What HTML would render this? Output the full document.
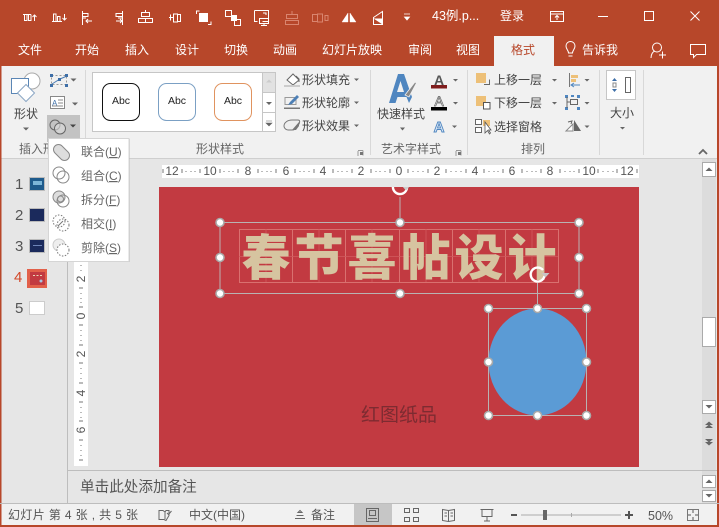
<!DOCTYPE html>
<html><head><meta charset="utf-8"><style>
html,body{margin:0;padding:0;background:#e6e6e6;overflow:hidden}
svg{display:block}
text{font-family:"Liberation Sans","Noto Sans CJK SC",sans-serif;font-size:12px}
.w{fill:#fff}.d{fill:#555}.m{text-anchor:middle}
.ws{fill:none;stroke:#fff;stroke-width:1}
.g{fill:none;stroke:#777;stroke-width:1}
.h{fill:#fff;stroke:#a9a9a9;stroke-width:1.6}
.tri{fill:#666}
.art{font-family:"Noto Sans CJK SC",sans-serif;font-weight:900;font-size:49px;fill:#D6C4A0;text-anchor:middle}
</style></head><body>
<svg width="719" height="527" viewBox="0 0 719 527" xmlns="http://www.w3.org/2000/svg">
<rect width="719" height="527" fill="#e6e6e6"/>
<rect width="719" height="66" fill="#B7472A"/>
<rect x="0" y="66" width="719" height="92" fill="#f1f1f1"/>
<rect x="0" y="158" width="719" height="1" fill="#cfcfcf"/>
<rect x="0" y="0" width="1.5" height="527" fill="#B7472A"/>
<rect x="717" y="0" width="2" height="527" fill="#B7472A"/>

<!-- QAT icons -->
<g class="ws">
<path d="M23 14.500h8M24.500 14.500v6h2.500v-6M28.500 14.500v6h2.500v-6"/><path d="M34.500 21v-6M32.500 17l2-2 2 2"/>
<path d="M52 21.500h10M53.500 21v-7h2.500v7M57.500 21v-4.500h2.500v4.500M64.500 14v6M62.500 18l2 2 2-2"/>
<path d="M82.500 11v14M83 13.500h5v3h-5M83 18h3M92 21h-6M88 19l-2 2 2 2" />
<path d="M122.500 11v14M122 13.500h-6v3h6M116 21h6M120 19l2 2-2 2M122 18h-4"/>
<path d="M145.500 10v3M145.500 19v4M141.500 12.500h8v4h-8zM138.500 18.500h14v4h-14z"/>
<path d="M169 17.500h4M173.500 14h4v8h-4zM177.500 14.500h3v7h-3zM170.500 14.500v6"/>
<path d="M196.500 14v-3h3M208 24.500h3v-3"/>
<rect x="199" y="13" width="9" height="9" fill="#fff" stroke="none"/>
<rect x="225.500" y="10.500" width="6" height="6"/><rect x="234.500" y="19.500" width="6" height="6"/><rect x="231" y="15" width="6" height="6" fill="#fff" stroke="none"/>
<path d="M254.500 10.500h14v11h-6M254.500 10.500v11h3"/><path d="M259.500 18.500h9v5h-9zM264 23.500v2M261 25.500h6"/><path d="M263 13h3v2"/>
</g>
<g fill="none" stroke="#d9856f">
<path d="M292 11v4M286.500 14.500h11v4h-11zM285.500 20.500h13v4h-13z"/>
<path d="M312.500 14.500h5v7h-5zM317.500 14h5v8h-5zM325 15.500h3v5h-3z"/>
</g>
<path d="M342 22l6-9v9zM350 13l6 9h-6z" fill="#fff" stroke="#fff" stroke-width=".4"/>
<path d="M373.500 17.500l9-6v13h-9z" fill="none" stroke="#fff"/><path d="M373.500 18.500h9v6z" fill="#fff"/>
<path d="M404 14h6M404.500 17h5l-2.500 3z" fill="#fff" stroke="#fff" stroke-width=".8"/>
<text x="432" y="20" class="w" style="font-size:12.500px">43例.p...</text>
<text x="500" y="20" class="w">登录</text>
<g class="ws"><rect x="550.500" y="11.500" width="13" height="10"/><path d="M550.500 14h13M557 20v-4M555 17.500l2-2 2 2"/>
<path d="M598 16.500h10"/><rect x="644.500" y="11.500" width="9" height="9"/><path d="M690.500 11.500l9 9M699.500 11.500l-9 9"/></g>

<!-- Tabs -->
<rect x="494" y="36" width="60" height="30" fill="#f1f1f1"/>
<text x="18" y="54" class="w">文件</text><text x="75" y="54" class="w">开始</text><text x="125" y="54" class="w">插入</text><text x="175" y="54" class="w">设计</text><text x="224" y="54" class="w">切换</text><text x="273" y="54" class="w">动画</text><text x="322" y="54" class="w">幻灯片放映</text><text x="408" y="54" class="w">审阅</text><text x="456" y="54" class="w">视图</text>
<text x="511" y="54" fill="#B7472A">格式</text>
<g class="ws"><path d="M568.500 53c0-3-2.500-3.500-2.500-7a4.500 4.500 0 0 1 9 0c0 3.500-2.500 4-2.500 7zM568.500 56h4"/></g>
<text x="582" y="54" class="w">告诉我</text>
<g class="ws"><circle cx="657" cy="47.500" r="4.500"/><path d="M651 58c0-4 2-6.500 4-7"/><path d="M659 55h7M662.500 51.500v7"/>
<path d="M690.500 44.500h15v10h-9l-3 3v-3h-3z"/></g>

<!-- Insert group -->
<circle cx="32" cy="81" r="8" fill="#fff" stroke="#a9a9a9"/>
<rect x="11.500" y="78.500" width="17" height="15" fill="#fff" stroke="#5b86b5"/>
<path d="M17.500 93l8.500-8.500 8.500 8.500-8.500 8.500z" fill="#fff" stroke="#8aa6c4"/>
<text x="26" y="118" class="m" fill="#444">形状</text>
<path d="M23 127.500h6l-3 3z" class="tri"/>
<g>
<rect x="51.500" y="75.500" width="15" height="9" fill="none" stroke="#999" stroke-dasharray="2 2"/>
<path d="M52 84l8-5 7-3" fill="none" stroke="#4d7fb5"/>
<rect x="50" y="74" width="3" height="3" fill="#3e6fa8"/><rect x="65" y="74" width="3" height="3" fill="#3e6fa8"/><rect x="50" y="84" width="3" height="3" fill="#3e6fa8"/><rect x="65" y="84" width="3" height="3" fill="#3e6fa8"/><rect x="58" y="78" width="3" height="3" fill="#3e6fa8"/>
<rect x="50.500" y="96.500" width="14" height="12" fill="#fff" stroke="#888"/>
<text x="52" y="106" style="font-size:8px" fill="#3e6fa8">A</text><path d="M58 100h5M58 103h5M52 106h11" stroke="#888"/>
<path d="M70.500 78.500h6l-3 3zM72 102.500h6l-3 3z" class="tri"/>
</g>
<rect x="47" y="115" width="33" height="27" fill="#c3c3c3"/>
<circle cx="55" cy="125" r="5" fill="none" stroke="#666"/><circle cx="60" cy="128.500" r="5.500" fill="#ddd" fill-opacity=".6" stroke="#666"/>
<path d="M70 124.500h6l-3 3z" fill="#444"/>
<rect x="85" y="70" width="1" height="85" fill="#d8d8d8"/>
<text x="19" y="153" fill="#666">插入形</text>

<!-- Shape styles -->
<rect x="92.500" y="72.500" width="170" height="59" fill="#fff" stroke="#c6c6c6"/>
<rect x="102.500" y="83.500" width="37" height="37" rx="8" fill="#fff" stroke="#111"/>
<rect x="158.500" y="83.500" width="37" height="37" rx="8" fill="#fff" stroke="#7ba0c4"/>
<rect x="214.500" y="83.500" width="37" height="37" rx="8" fill="#fff" stroke="#e0935f"/>
<text x="121" y="104" class="m" style="font-size:10.500px" fill="#222">Abc</text><text x="177" y="104" class="m" style="font-size:10.500px" fill="#222">Abc</text><text x="233" y="104" class="m" style="font-size:10.500px" fill="#222">Abc</text>
<rect x="262.500" y="72.500" width="13" height="20" fill="#e2e2e2" stroke="#c6c6c6"/><rect x="262.500" y="92.500" width="13" height="20" fill="#fff" stroke="#c6c6c6"/><rect x="262.500" y="112.500" width="13" height="19" fill="#fff" stroke="#c6c6c6"/>
<path d="M266 82.500h6l-3-3z" fill="#ccc"/><path d="M266 102h6l-3 3z" class="tri"/><path d="M266 121h6M266 123h6l-3 3z" stroke="#666" stroke-width=".6" fill="#666"/>
<text x="196" y="153" fill="#666">形状样式</text>
<path d="M358 150.500h5M363 150.500v5M358 151v5" stroke="#999" fill="none"/><rect x="360" y="152" width="3" height="3" fill="#777"/>

<!-- Shape fill/outline/effect -->
<path d="M287 80l6-6 6 6-6 5z" fill="#fff" stroke="#666"/><path d="M296 76l3 3v3" fill="none" stroke="#666"/><rect x="284" y="85" width="16" height="2" fill="#ccc"/>
<text x="302" y="84" fill="#444">形状填充</text><path d="M354 78.500h5l-2.500 2.500z" class="tri"/>
<path d="M285 97.500h11v7h-11z" fill="none" stroke="#999"/><path d="M288 105l2-3 7-7 2 2-7 7z" fill="#4d7fb5"/><rect x="284" y="107.500" width="16" height="1.500" fill="#777"/>
<text x="302" y="107" fill="#444">形状轮廓</text><path d="M354 101.500h5l-2.500 2.500z" class="tri"/>
<path d="M284 126a8 6 0 0 1 8-6h6c2 0 2 2 1 4l-2 3c-1 2-3 3-5 3h-4c-2 0-4-2-4-4z" fill="#eee" stroke="#777"/><path d="M292 130l7-8v4l-3 4z" fill="#777"/>
<text x="302" y="130" fill="#444">形状效果</text><path d="M354 124.500h5l-2.500 2.500z" class="tri"/>
<rect x="370" y="70" width="1" height="85" fill="#d8d8d8"/>

<!-- WordArt -->
<path d="M389 103l9-29h6l8 23-3 6-2.500-6h-9l-2 6zM397 92h7l-3.500-11z" fill="#4f86c0" fill-rule="evenodd"/>
<path d="M405 95l10-13 1.500 1-7.500 14z" fill="#888" stroke="#f1f1f1" stroke-width=".8"/>
<text x="401" y="118" class="m" fill="#444">快速样式</text>
<path d="M400 127.500h5l-2.500 3z" class="tri"/>
<text x="439" y="85" class="m" style="font-size:14px;font-weight:bold" fill="#555">A</text><rect x="431" y="85" width="16" height="3.500" fill="#7f1d1d"/>
<text x="439" y="106" class="m" style="font-size:14px" fill="#fff" stroke="#666" stroke-width=".7">A</text><rect x="431" y="107" width="16" height="3.500" fill="#000"/>
<text x="439" y="132" class="m" style="font-size:15px;font-weight:bold" fill="#dbe7f5" stroke="#4f86c0" stroke-width=".9">A</text>
<path d="M453 79h5l-2.500 2.500zM453 102h5l-2.500 2.500zM452 125.500h5l-2.500 2.500z" class="tri"/>
<text x="381" y="153" fill="#666">艺术字样式</text>
<path d="M456 150.500h5M461 150.500v5M456 151v5" stroke="#999" fill="none"/><rect x="458" y="152" width="3" height="3" fill="#777"/>
<rect x="467" y="70" width="1" height="85" fill="#d8d8d8"/>

<!-- Arrange -->
<rect x="476" y="73" width="10" height="10" fill="#edc078"/><path d="M484 84.500h5.500v-5" fill="none" stroke="#666"/>
<text x="494" y="84" fill="#444">上移一层</text>
<rect x="476" y="96" width="10" height="10" fill="#edc078"/><rect x="483.500" y="102.500" width="6.500" height="6.500" fill="#fff" stroke="#555"/>
<text x="494" y="107" fill="#444">下移一层</text>
<path d="M475.500 119.500h6v5h-6zM475.500 127.500h6v5h-6z" fill="#fff" stroke="#666"/><rect x="483" y="120" width="7" height="6" fill="#edc078"/><path d="M485 122v11l2.500-2.500 2 3.500 1-1-2-3h2.500z" fill="#fff" stroke="#555" stroke-width=".8"/>
<text x="494" y="131" fill="#444">选择窗格</text>
<path d="M552 79h5l-2.500 2.500zM552 102h5l-2.500 2.500zM584.500 79h5l-2.500 2.500zM584.500 102h5l-2.500 2.500zM584.500 125.500h5l-2.500 2.500z" class="tri"/>
<path d="M569.500 73v14" stroke="#777"/><rect x="571" y="75" width="7" height="3" fill="#edc078"/><rect x="571" y="79" width="5" height="3" fill="#edc078"/><path d="M580 85h-9M574 83l-3 2 3 2" stroke="#4f86c0" fill="none"/>
<g fill="#4f86c0"><rect x="565" y="95" width="3" height="3"/><rect x="577" y="95" width="3" height="3"/><rect x="565" y="107" width="3" height="3"/><rect x="577" y="107" width="3" height="3"/><rect x="571" y="95" width="3" height="2"/></g>
<path d="M570.500 99.500h7v5h-7zM567.500 102h3M567 97v11" fill="none" stroke="#666"/>
<path d="M566 131l7-7v7z" fill="#fff" stroke="#888"/><path d="M574 120l7 11h-7z" fill="#666"/><path d="M568 122l4-1-1 3" fill="none" stroke="#666"/>
<rect x="599" y="70" width="1" height="85" fill="#d8d8d8"/>
<rect x="606.500" y="70.500" width="29" height="29" fill="#fff" stroke="#c6c6c6"/>
<rect x="625.500" y="77.500" width="5" height="15" fill="#fff" stroke="#666"/>
<path d="M617 81l-2.500-3-2.500 3zM617 89l-2.500 3-2.500-3z" fill="#3e6fa8"/><rect x="613" y="83" width="3" height="4" fill="none" stroke="#888"/>
<text x="622" y="117" class="m" fill="#444">大小</text>
<path d="M620 127h5l-2.500 2.500z" class="tri"/>
<text x="521" y="153" fill="#666">排列</text>
<rect x="643" y="70" width="1" height="85" fill="#d8d8d8"/>
<path d="M699 154l4-4 4 4" fill="none" stroke="#666" stroke-width="1.800"/>

<!-- Ruler horizontal -->
<rect x="162" y="165" width="477" height="13" fill="#fff"/>
<g fill="#555">
<text x="172" y="175" class="m">12</text><text x="210" y="175" class="m">10</text><text x="248" y="175" class="m">8</text><text x="286" y="175" class="m">6</text><text x="323" y="175" class="m">4</text><text x="361" y="175" class="m">2</text><text x="399" y="175" class="m">0</text><text x="437" y="175" class="m">2</text><text x="475" y="175" class="m">4</text><text x="512" y="175" class="m">6</text><text x="550" y="175" class="m">8</text><text x="589" y="175" class="m">10</text><text x="627" y="175" class="m">12</text>
</g>
<path d="M163 169v4M182 169v4M186 171v1M191 171v1M195 171v1M200 169v4M220 169v4M224 171v1M229 171v1M233 171v1M238 169v4M258 169v4M262 171v1M267 171v1M271 171v1M276 169v4M295 169v4M300 171v1M304 171v1M309 171v1M314 169v4M333 169v4M338 171v1M342 171v1M347 171v1M352 169v4M371 169v4M376 171v1M380 171v1M385 171v1M390 169v4M408 169v4M413 171v1M418 171v1M423 171v1M428 169v4M446 169v4M451 171v1M456 171v1M461 171v1M466 169v4M484 169v4M489 171v1M494 171v1M498 171v1M503 169v4M522 169v4M527 171v1M532 171v1M536 171v1M541 169v4M560 169v4M565 171v1M570 171v1M574 171v1M579 169v4M598 169v4M603 171v1M608 171v1M613 171v1M617 169v4M637 169v4" stroke="#777" fill="none"/>

<!-- Left panel -->
<rect x="67" y="159" width="1" height="344" fill="#bdbdbd"/>
<text x="15" y="189" style="font-size:15px" fill="#555">1</text><text x="15" y="220" style="font-size:15px" fill="#555">2</text><text x="15" y="251" style="font-size:15px" fill="#555">3</text><text x="14" y="282" style="font-size:15px" fill="#D2492A">4</text><text x="15" y="313" style="font-size:15px" fill="#555">5</text>
<rect x="29.500" y="177.500" width="15" height="13" fill="#1e5b8c" stroke="#bbb"/><rect x="33" y="181" width="9" height="4" fill="#7cb6d8"/>
<rect x="29.500" y="208.500" width="15" height="13" fill="#1b2a5c" stroke="#bbb"/>
<rect x="29.500" y="239.500" width="15" height="13" fill="#1b2a5c" stroke="#bbb"/><rect x="33" y="245" width="9" height="1" fill="#6e84b8"/>
<rect x="27" y="269" width="20" height="19" fill="#E2604A"/><rect x="30" y="272" width="15" height="13" fill="#C23A41"/><path d="M33 275.500h9" stroke="#e8d8b8" stroke-dasharray="2 1.500"/><circle cx="41" cy="281" r="1.500" fill="#a8c4e0"/>
<rect x="29.500" y="301.500" width="15" height="13" fill="#fff" stroke="#ccc"/>

<!-- Ruler vertical -->
<rect x="74" y="178" width="14" height="288" fill="#fff"/>
<g fill="#555">
<text transform="translate(85,279) rotate(-90)" class="m">2</text><text transform="translate(85,316) rotate(-90)" class="m">0</text><text transform="translate(85,354) rotate(-90)" class="m">2</text><text transform="translate(85,393) rotate(-90)" class="m">4</text><text transform="translate(85,430) rotate(-90)" class="m">6</text>
</g>
<path d="M81 265v1M81 270v1M79 288h4M81 293v1M81 298v1M81 302v1M79 307h4M79 325h4M81 330v1M81 335v1M81 340v1M79 345h4M79 363h4M81 368v1M81 373v1M81 378v1M79 383h4M79 402h4M81 407v1M81 412v1M81 417v1M79 421h4M79 440h4M81 445v1M81 450v1M81 455v1M79 460h4" stroke="#777" fill="none"/>

<!-- Slide -->
<rect x="159" y="187" width="480" height="280" fill="#C23A41"/>
<g fill="none" stroke="#d9706f">
<rect x="239.500" y="229.500" width="319" height="53"/>
<path d="M292.500 229v53M345.500 229v53M399.500 229v53M452.500 229v53M505.500 229v53"/>
<path d="M239 256.500h319M266 229v53M319 229v53M372 229v53M426 229v53M479 229v53M532 229v53" stroke="#cf5a5c" stroke-opacity=".8"/>
</g>
<text x="266" y="275" class="art">春</text>
<text x="319" y="275" class="art">节</text>
<text x="372" y="275" class="art">喜</text>
<text x="426" y="275" class="art">帖</text>
<text x="479" y="275" class="art">设</text>
<text x="532" y="275" class="art">计</text>
<ellipse cx="537.500" cy="362" rx="49" ry="53.500" fill="#5B9BD5"/>
<text x="399" y="421" class="m" style="font-size:19px" fill="#7d2b31">红图纸品</text>
<g fill="none" stroke="#b9b2b2">
<rect x="220" y="222.500" width="359" height="71"/><path d="M400 197v25M537.500 283v25"/>
<rect x="488.500" y="308.500" width="98" height="107"/>
</g>
<g class="h">
<circle cx="220" cy="222.500" r="4"/><circle cx="400" cy="222.500" r="4"/><circle cx="579" cy="222.500" r="4"/>
<circle cx="220" cy="257.500" r="4"/><circle cx="579" cy="257.500" r="4"/>
<circle cx="220" cy="293.500" r="4"/><circle cx="400" cy="293.500" r="4"/><circle cx="579" cy="293.500" r="4"/>
<circle cx="488.500" cy="308.500" r="4"/><circle cx="537.500" cy="308.500" r="4"/><circle cx="586.500" cy="308.500" r="4"/>
<circle cx="488.500" cy="362" r="4"/><circle cx="586.500" cy="362" r="4"/>
<circle cx="488.500" cy="415.500" r="4"/><circle cx="537.500" cy="415.500" r="4"/><circle cx="586.500" cy="415.500" r="4"/>
</g>
<!-- rotate handles -->
<path d="M543 270a7 7 0 1 0 1.500 6" fill="none" stroke="#fff" stroke-width="2.400"/>
<path d="M541.500 273h8l-4 4.500z" fill="#c9c4c4"/>
<path d="M393 186a7 7 0 0 0 14 2" fill="none" stroke="#fff" stroke-width="2.400"/>
<path d="M402 186h8l-4 4.500z" fill="#ccc"/>
<rect x="159" y="178" width="480" height="9" fill="#e6e6e6"/>

<!-- Scrollbars -->
<rect x="702" y="159" width="14" height="311" fill="#dcdcdc"/>
<rect x="702.500" y="162.500" width="13" height="14" fill="#fff" stroke="#aaa"/><path d="M705.500 171h7l-3.500-3.500z" class="tri"/>
<rect x="702.500" y="317.500" width="13" height="29" fill="#fff" stroke="#aaa"/>
<rect x="702.500" y="400.500" width="13" height="13" fill="#fff" stroke="#aaa"/><path d="M705.500 405h7l-3.500 3.500z" class="tri"/>
<path d="M705 425h8l-4-3.500zM705 428h8l-4-3.500z" class="tri"/><path d="M705 439h8l-4 3.500zM705 442h8l-4 3.500z" class="tri"/>

<!-- Notes -->
<rect x="68" y="470" width="649" height="1" fill="#bdbdbd"/>
<text x="80" y="491.500" style="font-size:14.600px" fill="#555">单击此处添加备注</text>
<rect x="702" y="471" width="14" height="32" fill="#dcdcdc"/>
<rect x="702.500" y="475.500" width="13" height="12" fill="#fff" stroke="#aaa"/><path d="M705.500 483h7l-3.500-3.500z" class="tri"/>
<rect x="702.500" y="490.500" width="13" height="11" fill="#fff" stroke="#aaa"/><path d="M705.500 494h7l-3.500 3.500z" class="tri"/>

<!-- Status -->
<rect x="0" y="503" width="719" height="1" fill="#bdbdbd"/>
<rect x="1.500" y="504" width="715.500" height="21" fill="#f1f1f1"/>
<rect x="354" y="504" width="38" height="21" fill="#c6c6c6"/>
<text x="8" y="519" fill="#555" textLength="130" lengthAdjust="spacing">幻灯片 第 4 张 , 共 5 张</text>
<path d="M159 510.500h4l2 1.500 1-1.500h3v5l-3 5-2-1h-5zM165 512v7M167 513l1.500 1.500 3-3.500" fill="none" stroke="#666"/>
<text x="189" y="519" fill="#555">中文(中国)</text>
<path d="M295 518.500h10M296.500 515.500h7M298 512.500h4l-2-2z" fill="none" stroke="#666"/>
<text x="311" y="519" fill="#555">备注</text>
<rect x="366.500" y="508.500" width="12" height="13" fill="none" stroke="#666"/><rect x="369.500" y="510.500" width="6" height="5" fill="none" stroke="#666"/><path d="M368 518.500h9" stroke="#666"/>
<g fill="none" stroke="#666"><rect x="404.500" y="508.500" width="5" height="4"/><rect x="413.500" y="508.500" width="5" height="4"/><rect x="404.500" y="517.500" width="5" height="4"/><rect x="413.500" y="517.500" width="5" height="4"/>
<path d="M442.500 509.500l6 1 6-1v11l-6 1-6-1zM448.500 510.500v11M444.500 513h2.500M444.500 516h2.500M450.500 513h2.500M450.500 516h2.500"/>
<path d="M480.500 509.500h13M482 509.500v7h10v-7M487 516.500v4M484 521h6"/></g>
<rect x="511" y="514" width="6" height="2" fill="#555"/>
<rect x="521" y="514.500" width="100" height="1" fill="#aaa"/><rect x="571" y="513" width="1" height="4" fill="#aaa"/>
<rect x="543" y="510" width="4" height="10" fill="#666"/>
<path d="M625 515h8M629 511v8" stroke="#555" stroke-width="2"/>
<text x="648" y="520" style="font-size:12.500px" fill="#555">50%</text>
<rect x="687.500" y="509.500" width="11" height="11" fill="none" stroke="#777"/><path d="M693 510v3M693 517v3M688 515h3M695 515h3" stroke="#555"/>
<rect x="0" y="525" width="719" height="2" fill="#B7472A"/>

<!-- Menu -->
<rect x="48" y="138" width="81" height="123" fill="#000" opacity=".12" transform="translate(1,1)"/>
<rect x="48.500" y="138.500" width="80.500" height="123" fill="#fff" stroke="#d5d5d5"/>
<text x="81" y="156" fill="#666">联合(<tspan text-decoration="underline">U</tspan>)</text>
<text x="81" y="180" fill="#666">组合(<tspan text-decoration="underline">C</tspan>)</text>
<text x="81" y="204" fill="#666">拆分(<tspan text-decoration="underline">F</tspan>)</text>
<text x="81" y="228" fill="#666">相交(<tspan text-decoration="underline">I</tspan>)</text>
<text x="81" y="252" fill="#666">剪除(<tspan text-decoration="underline">S</tspan>)</text>
<path d="M58.500 149.500l6 6" stroke="#888" stroke-width="11" stroke-linecap="round" fill="none"/>
<path d="M58.500 149.500l6 6" stroke="#ddd" stroke-width="9" stroke-linecap="round" fill="none"/>
<g fill="none" stroke="#888"><circle cx="59" cy="173" r="6"/><circle cx="63" cy="177" r="6"/></g>
<g fill="none" stroke="#888"><circle cx="59" cy="197" r="6" fill="#ddd"/><circle cx="63" cy="201" r="6"/><circle cx="60.500" cy="199" r="3"/></g>
<g fill="none" stroke="#777" stroke-dasharray="1.500 1.500"><circle cx="59" cy="221" r="6"/><circle cx="63" cy="225" r="6"/></g><path d="M58 226l5-5" stroke="#777"/>
<circle cx="59" cy="245" r="6" fill="#eee" stroke="#ccc"/><circle cx="63" cy="250" r="6" fill="#fff" stroke="#777" stroke-dasharray="1.500 1.500"/>
</svg>
</body></html>
